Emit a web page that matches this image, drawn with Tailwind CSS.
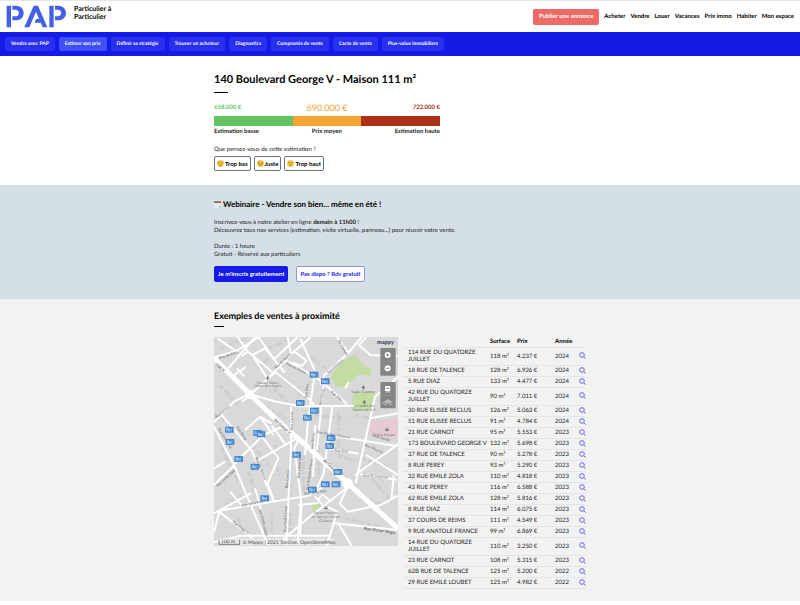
<!DOCTYPE html>
<html lang="fr">
    <head>
        <meta charset="UTF-8" />
        <meta name="viewport" content="width=device-width, initial-scale=1.0" />
        <title>PAP - Estimer son prix</title>
        <script src="https://cdn.jsdelivr.net/npm/@tailwindcss/browser@4"></script>
    </head>
    <body class="bg-white font-[Lato,sans-serif] text-[6px] leading-[8px] text-[#222] [text-rendering:geometricPrecision]">
        <header class="flex h-8 items-center border-t border-gray-200 pr-1.5 pl-1.5">
            <a href="#" class="flex gap-[7px]" aria-label="PAP, Particulier à Particulier">
                <svg class="h-[23px] w-[61px]" viewBox="0 0 183 69" fill="#4361e6">
                    <path d="M2 2h13v65H2zM19 2h10c32 0 32 44 0 44h-10V34h9c14 0 14-20 0-20h-9z" />
                    <path d="M83 2h13l28 65h-14l-6-14H86l4-11h9L90 20 70 67H55z" />
                    <path d="M130 2h13v65h-13zM147 2h9c32 0 32 44 0 44h-9V34h8c14 0 14-20 0-20h-8z" />
                </svg>
                <span class="text-[7px] leading-[8px] font-bold text-black">Particulier à<br />Particulier</span>
            </a>
            <nav class="ml-auto flex items-center gap-[5px] font-bold text-black">
                <a href="#" class="rounded-xs bg-[#ed6a65] px-1.5 py-1 text-white">Publier une annonce</a>
                <a href="#">Acheter</a>
                <a href="#">Vendre</a>
                <a href="#">Louer</a>
                <a href="#">Vacances</a>
                <a href="#">Prix immo</a>
                <a href="#">Habiter</a>
                <a href="#">Mon espace</a>
            </nav>
        </header>

        <nav class="flex h-6 items-center gap-1 bg-[#151be6] px-[5px] text-[5px] leading-[8px] font-bold text-white">
            <a href="#" class="rounded-xs bg-[#2830ee] px-1.5 py-[3px]">Vendre avec PAP</a>
            <a href="#" class="rounded-xs bg-[#3f50f5] px-1.5 py-[3px]">Estimer son prix</a>
            <a href="#" class="rounded-xs bg-[#2830ee] px-1.5 py-[3px]">Définir sa stratégie</a>
            <a href="#" class="rounded-xs bg-[#2830ee] px-1.5 py-[3px]">Trouver un acheteur</a>
            <a href="#" class="rounded-xs bg-[#2830ee] px-1.5 py-[3px]">Diagnostics</a>
            <a href="#" class="rounded-xs bg-[#2830ee] px-1.5 py-[3px]">Compromis de vente</a>
            <a href="#" class="rounded-xs bg-[#2830ee] px-1.5 py-[3px]">L'acte de vente</a>
            <a href="#" class="rounded-xs bg-[#2830ee] px-1.5 py-[3px]">Plus-value immobiliers</a>
        </nav>

        <main>
            <section class="mx-auto max-w-[372px] pt-4 pb-3.5">
                <h1 class="text-[11px] leading-4 font-bold text-black">140 Boulevard George V - Maison 111 m²</h1>
                <div class="mt-1 h-px w-3.5 bg-black"></div>
                <div class="mt-2 w-[226px]">
                    <div class="flex h-3.5 items-center justify-between font-bold">
                        <span class="text-[#62c462]">658.000 €</span>
                        <span class="text-[9px] font-normal text-[#f0a030]">690.000 €</span>
                        <span class="text-[#a93014]">722.000 €</span>
                    </div>
                    <div class="mt-px flex h-2.5">
                        <div class="w-[35%] bg-[#62c462]"></div>
                        <div class="w-[30%] bg-[#f4a433]"></div>
                        <div class="w-[35%] bg-[#ab3015]"></div>
                    </div>
                    <div class="mt-0.5 flex justify-between font-bold">
                        <span>Estimation basse</span>
                        <span>Prix moyen</span>
                        <span>Estimation haute</span>
                    </div>
                </div>
                <p class="mt-2.5">Que pensez-vous de cette estimation ?</p>
                <div class="mt-0.5 flex gap-[3px] font-bold text-black">
                    <button class="flex h-[15px] items-center gap-px rounded-xs border border-gray-500 px-0.5">
                        <svg class="size-[7px]" viewBox="0 0 18 18"><circle cx="9" cy="9" r="9" fill="#f7c843" /><path d="M3 7h4M11 7h4M6 12q3 3 6 0" stroke="#8a5a20" stroke-width="2" fill="none" /></svg>
                        Trop bas
                    </button>
                    <button class="flex h-[15px] items-center gap-px rounded-xs border border-gray-500 px-0.5">
                        <svg class="size-[7px]" viewBox="0 0 18 18"><circle cx="9" cy="9" r="9" fill="#f7c843" /><path d="M3 7h4M11 7h4M4 10q5 7 10 0" stroke="#8a5a20" stroke-width="2" fill="none" /></svg>
                        Juste
                    </button>
                    <button class="flex h-[15px] items-center gap-px rounded-xs border border-gray-500 px-0.5">
                        <svg class="size-[7px]" viewBox="0 0 18 18"><circle cx="9" cy="9" r="9" fill="#f7c843" /><path d="M3 7h4M11 7h4M6 13q3-3 6 0" stroke="#8a5a20" stroke-width="2" fill="none" /></svg>
                        Trop haut
                    </button>
                </div>
            </section>

            <section class="bg-[#d5dfe6]">
                <div class="mx-auto max-w-[372px] pt-3.5 pb-[17px]">
                    <h2 class="flex items-center gap-0.5 text-[8px] leading-[10px] font-bold text-black">
                        <svg class="size-[7px]" viewBox="0 0 21 21"><path d="M1 3h19v13l-5 4H1z" fill="#eef2f5" /><path d="M0 1h21v5H0z" fill="#8f5a58" /><path d="M20 15l-5 5v-5z" fill="#8b96a0" /><path d="M4 10h12M4 14h8" stroke="#b9c3cb" stroke-width="1.5" /></svg>
                        Webinaire - Vendre son bien... même en été !
                    </h2>
                    <p class="mt-2.5">
                        Inscrivez-vous à notre atelier en ligne <b>demain à 11h00</b> !<br />
                        Découvrez tous nos services (estimation, visite virtuelle, panneau...) pour réussir votre vente.
                    </p>
                    <p class="mt-2">Durée : 1 heure<br />Gratuit - Réservé aux particuliers</p>
                    <div class="mt-[7px] flex gap-2 font-bold">
                        <button class="h-4 rounded-xs bg-[#151be6] px-1 text-white">Je m'inscris gratuitement</button>
                        <button class="h-4 rounded-xs border border-[#8f92ee] bg-white px-[3px] text-[#151be6]">Pas dispo ? Rdv gratuit</button>
                    </div>
                </div>
            </section>

            <section class="bg-[#f2f2f2]">
                <div class="mx-auto max-w-[372px] pt-[11px] pb-3">
                    <h2 class="text-[9px] leading-3 font-bold text-black">Exemples de ventes à proximité</h2>
                    <div class="mt-1 h-px w-2.5 bg-black"></div>
                    <div class="mt-2.5 flex items-start gap-[5px]">
                        <svg class="w-[184px] shrink-0" viewBox="27 96 552 627" font-family="Lato, sans-serif">
                            <rect x="27" y="96" width="552" height="627" fill="#d9d9d9" />
                            <!-- building blocks -->
                            <g fill="none" stroke="#cecece" stroke-width="9" stroke-dasharray="14 7 23 6 9 8">
                                <path d="M45 130l70-26M190 130l60-25M160 190l40-40M205 250l50 50M230 215l60 55M300 140l70 60M45 240l55 60M160 290l80 50M330 330l90 10M400 320v120M450 330l90 20M50 340l60 60" />
                                <path d="M50 430l50 100M140 420l60 70M130 500l35 100M210 420l10 90M255 470v100M295 450v110M340 400v120M470 460l80 25M420 640l100 25M60 600l50-30M100 640l20 70M200 620v90M255 620v90M290 610v90M500 520l60 70M450 560l80 40M400 450l50 20" />
                            </g>
                            <path d="M410 170l40-22 28 34 26 12-10 20-32-6-42 42-28-6-16-28z" fill="#c3dca3" />
                            <path d="M446 262l66-4-14 60-60-4z" fill="#c3dca3" />
                            <path d="M318 592l24-8 8 26-24 12z" fill="#c3dca3" />
                            <path d="M492 350l87-10v62l-88-12z" fill="#e6ccd2" />
                            <!-- streets -->
                            <g fill="none" stroke="#fff" stroke-width="6" stroke-linejoin="round">
                                <path d="M27 158l70-22 65-40M98 96l30 44-18 14M38 100l60 42M70 190l80-94M160 96l48 66 70-66M142 150l38-20 60 74M130 140l76 65M142 150l46 72-76 68M188 222l70-74 60-52M258 148l-10-52" />
                                <path d="M188 222l24-20 100 80 16 18M135 268l80 22 70 14 165-2M240 165l90 50 26 20 70 62M268 140l36 26-14 18-26-12M285 100l44 95M330 200l-20 140-10 110M346 240l12-30 72-66 40-48M430 144l-34-48M462 120l34 30 82 4M460 122l24-26M420 250l12-20" />
                                <path d="M27 352l60-62 40-20M50 330l90 106 66 152M120 375l45-40 35 20M165 335l40 55M258 305v120l-14 295M282 400l-14 30 20 150-10 140M382 306l-26 200-28 60M330 360l-6 155M356 235l-20 200" />
                                <path d="M580 215l-70 60-38 170-20 90M495 340l84-15M484 450l95 60M450 510l129-92M380 392l190 30M370 430l90 16M465 508l110 16" />
                                <path d="M27 365l60 115 46 110 56 130M85 480l90-90 70-30M27 540l60-58M160 465l110-62M200 362l44 60M206 585l-18-50 32-76-50-66M27 625l110-60M37 618l130-22 144-24 44-26M75 560l36 42M27 680l16-60 100 80M150 550l20 70M60 470l-33 20" />
                                <path d="M436 540l-130 102-70 60M280 600l60-6M330 575l30 28 36 16-30 104M430 540l-26 56 24 24 100-20 50-28M566 510l-6 70M388 655l190 20M400 655l40 68M27 712l80-20 270 0M290 600l-4 95" />
                            </g>
                            <path d="M27 160l108 108 105 100 48 40 142 128 150 136" fill="none" stroke="#fff" stroke-width="15" />
                            <path d="M88 210l34-24M96 190l22 24" stroke="#fff" stroke-width="5" />
                            <circle cx="134" cy="268" r="14" fill="#fff" />
                            <circle cx="428" cy="536" r="16" fill="#fff" />
                            <rect x="342" y="574" width="28" height="24" rx="5" fill="#e2e2e2" stroke="#fff" stroke-width="5" transform="rotate(40 356 586)" />
                            <!-- street names -->
                            <g fill="#666" font-size="11">
                                <text transform="translate(44 163) rotate(-19)">Rue de Paris</text>
                                <text transform="translate(212 192) rotate(-42)">Rue de Reims</text>
                                <text transform="translate(243 178) rotate(27)">Rue de Reims</text>
                                <text transform="translate(370 206) rotate(-41)" fill="#77a">Rue d'Alsace</text>
                                <text transform="translate(398 108) rotate(60)">Av Clamart</text>
                                <text transform="translate(32 178) rotate(44)" font-weight="bold">orge V</text>
                                <text transform="translate(207 346) rotate(42)" font-weight="bold">Bd George V</text>
                                <text transform="translate(354 468) rotate(42)" font-weight="bold">Bd George V</text>
                                <text transform="translate(306 280) rotate(-83)">Rue Diaz</text>
                                <text transform="translate(350 300) rotate(-80)">Rue Perey</text>
                                <text transform="translate(376 262) rotate(40)">Rue Zola</text>
                                <text transform="translate(262 375) rotate(-88)">Rue Carnot</text>
                                <text transform="translate(34 340) rotate(-38)">Rue Leclerc</text>
                                <text transform="translate(38 372) rotate(58)">Rue Emile Zola</text>
                                <text transform="translate(94 366) rotate(58)">Rue Perey</text>
                                <text transform="translate(38 546) rotate(-42)">Rue Emile Zola</text>
                                <text transform="translate(150 460) rotate(68)">Rue de Talence</text>
                                <text transform="translate(248 550) rotate(-84)">Rue Carnot</text>
                                <text transform="translate(284 520) rotate(-86)">Rue Lamarck</text>
                                <text transform="translate(310 555) rotate(-82)">Rue Anatole France</text>
                                <text transform="translate(326 432) rotate(-86)">Rue Perey</text>
                                <text transform="translate(335 384) rotate(10)">Rue Pasteur Colonne</text>
                                <text transform="translate(388 438) rotate(6)">Rue Diaz</text>
                                <text transform="translate(504 395) rotate(16)">Rue Daniel</text>
                                <text transform="translate(478 422) rotate(24)">Rue Maurice</text>
                                <text transform="translate(474 514) rotate(6)">Rue Richardson</text>
                                <text transform="translate(110 606) rotate(-12)">Rue de la Paix</text>
                                <text transform="translate(298 570) rotate(-8)">Rue de la Paix</text>
                                <text transform="translate(162 614) rotate(76)">Rue Emile Loubet</text>
                                <text transform="translate(244 680) rotate(-88)">Rue Sadi Carnot</text>
                                <text transform="translate(82 652) rotate(40)">Rue Emile Z</text>
                                <text transform="translate(476 674) rotate(8)" font-weight="bold" font-size="13">Rue Victor Hugo</text>
                            </g>
                            <!-- places -->
                            <g fill="#777" font-size="11" text-anchor="middle">
                                <text x="188" y="236">Square Notre</text>
                                <text x="188" y="247">Dame des Anges</text>
                                <text x="474" y="264">Stade Suzanne</text>
                                <text x="478" y="307">Le Jardin des</text>
                                <text x="478" y="318">Dames de la G</text>
                                <text x="536" y="392">Centre Europe</text>
                                <text x="362" y="626">Square Pasteur</text>
                                <text x="362" y="638">de Talence Centre</text>
                                <text x="362" y="651">Colonne</text>
                            </g>
                            <g stroke="#666" stroke-width="3">
                                <path d="M188 214v12M183 219h10M475 242v12M470 247h10M478 286v12M473 291h10" />
                                <path d="M541 376h10M541 372h10M358 606h10M358 611h10" />
                            </g>
                            <!-- sale markers -->
                            <defs>
                                <g id="pin">
                                    <rect x="-13" y="-9" width="26" height="18" rx="2" fill="#3f85cf" />
                                    <path d="M-8 5v-9h4v9M-2 5v-6h4v6M6-4v5M6 3v3" fill="none" stroke="#d8e9f8" stroke-width="2" />
                                </g>
                            </defs>
                            <use href="#pin" x="327" y="209" />
                            <use href="#pin" x="361" y="229" />
                            <use href="#pin" x="286" y="294" />
                            <use href="#pin" x="328" y="317" />
                            <use href="#pin" x="307" y="338" />
                            <use href="#pin" x="73" y="374" />
                            <use href="#pin" x="75" y="411" />
                            <use href="#pin" x="158" y="384" />
                            <use href="#pin" x="168" y="388" />
                            <use href="#pin" x="101" y="462" />
                            <use href="#pin" x="150" y="485" />
                            <use href="#pin" x="179" y="580" />
                            <use href="#pin" x="275" y="449" />
                            <use href="#pin" x="378" y="399" />
                            <use href="#pin" x="374" y="423" />
                            <use href="#pin" x="399" y="501" />
                            <use href="#pin" x="322" y="554" />
                            <use href="#pin" x="361" y="538" />
                            <use href="#pin" x="393" y="538" />
                            <!-- map controls -->
                            <text x="516" y="116" font-size="17" font-weight="bold" fill="#2c3350">mappy</text>
                            <rect x="526" y="129" width="46" height="83" rx="3" fill="#858585" />
                            <rect x="526" y="231" width="46" height="79" rx="3" fill="#858585" />
                            <path d="M529 170h40M529 271h40" stroke="#999" stroke-width="2" />
                            <circle cx="548" cy="150" r="9" fill="#fff" />
                            <circle cx="548" cy="190" r="9" fill="#fff" />
                            <path d="M543 150h10M548 145v10M543 190h10" stroke="#777" stroke-width="2.5" />
                            <rect x="540" y="243" width="16" height="16" rx="3" fill="#fff" />
                            <path d="M543 250h10" stroke="#777" stroke-width="2.5" />
                            <path d="M543 264l3-5M553 264l-3-5" stroke="#fff" stroke-width="2" />
                            <g fill="none" stroke="#ddd" stroke-width="2">
                                <circle cx="541" cy="294" r="5" />
                                <circle cx="556" cy="294" r="5" />
                                <path d="M541 294l5-9h7l3 9M546 285l4 9 4-9" />
                            </g>
                            <rect x="38" y="700" width="352" height="20" fill="#fff" opacity=".4" />
                            <path d="M42 704v14h62v-14" fill="none" stroke="#444" stroke-width="2" />
                            <text x="48" y="715" font-size="15" fill="#444">100 m</text>
                            <text x="113" y="717" font-size="15" fill="#444">© Mappy | 2025 TomTom, OpenStreetMap</text>
                        </svg>

                        <table class="flex-1 text-left leading-[7px]">
                            <thead>
                                <tr class="h-2.5 border-b border-[#e4e4e4] font-bold text-black">
                                    <th class="w-[87px]"></th>
                                    <th class="w-[27px]">Surface</th>
                                    <th class="w-[38px]">Prix</th>
                                    <th class="w-6">Année</th>
                                    <th></th>
                                </tr>
                            </thead>
                            <tbody id="sales"></tbody>
                        </table>
                    </div>
                </div>
            </section>
        </main>

        <script>
            const sales = [
                ["114 RUE DU QUATORZE JUILLET", 118, "4.237", 2024],
                ["18 RUE DE TALENCE", 128, "6.926", 2024],
                ["5 RUE DIAZ", 133, "4.477", 2024],
                ["42 RUE DU QUATORZE JUILLET", 90, "7.011", 2024],
                ["30 RUE ELISEE RECLUS", 126, "5.063", 2024],
                ["51 RUE ELISEE RECLUS", 91, "4.784", 2024],
                ["21 RUE CARNOT", 95, "5.553", 2023],
                ["173 BOULEVARD GEORGE V", 132, "5.698", 2023],
                ["37 RUE DE TALENCE", 90, "5.278", 2023],
                ["8 RUE PEREY", 93, "5.290", 2023],
                ["32 RUE EMILE ZOLA", 110, "4.818", 2023],
                ["43 RUE PEREY", 116, "6.588", 2023],
                ["62 RUE EMILE ZOLA", 128, "5.816", 2023],
                ["8 RUE DIAZ", 114, "6.075", 2023],
                ["37 COURS DE REIMS", 111, "4.549", 2023],
                ["9 RUE ANATOLE FRANCE", 99, "6.869", 2023],
                ["14 RUE DU QUATORZE JUILLET", 110, "3.250", 2023],
                ["23 RUE CARNOT", 108, "5.315", 2023],
                ["62B RUE DE TALENCE", 125, "5.200", 2022],
                ["29 RUE EMILE LOUBET", 125, "4.982", 2022],
            ]

            document.getElementById("sales").innerHTML = sales
                .map(
                    ([street, area, price, year]) => `
                    <tr class="border-b border-[#e4e4e4]">
                        <td class="pt-px pb-0.5 pl-[5px]">${street}</td>
                        <td>${area} m²</td>
                        <td>${price} €</td>
                        <td>${year}</td>
                        <td class="pt-px pb-0.5">
                            <a href="#" aria-label="Voir ${street}">
                                <svg class="size-[7px]" viewBox="0 0 21 21" fill="none" stroke="#4a4de8" stroke-width="2.5"><circle cx="9" cy="9" r="7" /><path d="M14 14l6 6" /></svg>
                            </a>
                        </td>
                    </tr>`
                )
                .join("")
        </script>
    </body>
</html>
